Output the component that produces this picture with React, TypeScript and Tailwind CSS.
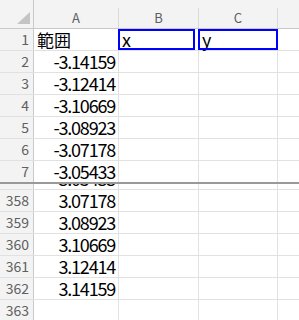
import React from "react";

const font = { fontFamily: '"Noto Sans CJK JP", "Noto Sans", sans-serif' };

type RowData = { n: number; a?: string; b?: string; c?: string; box?: boolean };

const top: RowData[] = [
  { n: 1, a: "範囲", b: "x", c: "y", box: true },
  { n: 2, a: "-3.14159" },
  { n: 3, a: "-3.12414" },
  { n: 4, a: "-3.10669" },
  { n: 5, a: "-3.08923" },
  { n: 6, a: "-3.07178" },
  { n: 7, a: "-3.05433" },
];

const bottom: RowData[] = [
  { n: 357, a: "3.05433" },
  { n: 358, a: "3.07178" },
  { n: 359, a: "3.08923" },
  { n: 360, a: "3.10669" },
  { n: 361, a: "3.12414" },
  { n: 362, a: "3.14159" },
  { n: 363 },
];

function isNumber(v?: string) {
  return v !== undefined && /^-?\d/.test(v);
}

function Row({ r, last }: { r: RowData; last?: boolean }) {
  const h = last ? "h-[21px]" : "h-[22px] border-b";
  return (
    <div className={`flex ${h} border-[#e1e1e1]`}>
      <div className="w-[34px] shrink-0 bg-[#f3f3f3] border-r border-r-[#c9c9c9] flex items-center justify-end pr-[4px] text-[14px] leading-[21px] text-[#5f5f5f]">
        {r.n}
      </div>
      <div
        className={`w-[85px] shrink-0 border-r border-[#e1e1e1] flex items-center leading-[21px] text-black ${
          isNumber(r.a)
            ? "justify-end pr-[3px] text-[18px] tracking-[-1.2px]"
            : "justify-start pl-[3px] text-[17px]"
        }`}
      >
        {r.a}
      </div>
      <div className="relative w-[80px] shrink-0 border-r border-[#e1e1e1] flex items-center pl-[3px] text-[18px] leading-[21px] text-black">
        {r.b}
        {r.box && (
          <div className="absolute left-[-1px] top-0 w-[77px] h-[21px] border-2 border-[#0000ff]" />
        )}
      </div>
      <div className="relative w-[79px] shrink-0 border-r border-[#e1e1e1] flex items-center pl-[3px] text-[18px] leading-[21px] text-black">
        {r.c}
        {r.box && (
          <div className="absolute left-[-1px] top-0 w-[80px] h-[21px] border-2 border-[#0000ff]" />
        )}
      </div>
      <div className="flex-1" />
    </div>
  );
}

export default function App() {
  return (
    <div className="w-[299px] h-[320px] overflow-hidden bg-white select-none" style={font}>
      {/* column headers */}
      <div className="flex h-[29px] bg-[#f3f3f3] border-b border-[#c9c9c9]">
        <div className="w-[34px] shrink-0 border-r border-[#c9c9c9] flex items-end justify-end pr-[2px] pb-[3px]">
          <svg width="14" height="13" viewBox="0 0 14 13">
            <polygon points="0,12 13,12 13,0" fill="#c4c4c4" />
          </svg>
        </div>
        <div className="flex flex-1 pt-[8px] text-[13px] leading-[20px] text-[#5f5f5f]">
          <div className="w-[85px] shrink-0 border-r border-[#dadada] text-center">A</div>
          <div className="w-[80px] shrink-0 border-r border-[#dadada] text-center">B</div>
          <div className="w-[79px] shrink-0 border-r border-[#dadada] text-center">C</div>
          <div className="flex-1" />
        </div>
      </div>

      {/* frozen top pane */}
      {top.map((r, i) => (
        <Row key={r.n} r={r} last={i === top.length - 1} />
      ))}

      {/* split bar */}
      <div className="h-[2px] bg-[#999999]" />

      {/* scrolled bottom pane */}
      <div className="overflow-hidden">
        <div className="mt-[-16px]">
          {bottom.map((r) => (
            <Row key={r.n} r={r} />
          ))}
        </div>
      </div>
    </div>
  );
}
